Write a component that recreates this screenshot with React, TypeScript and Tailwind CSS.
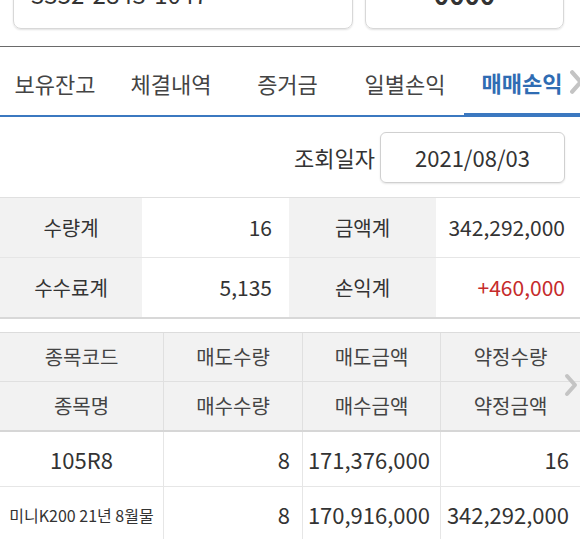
import React from "react";

const Chevron = ({ className }: { className: string }) => (
  <svg className={className} viewBox="0 0 14 24" fill="none">
    <polyline points="3,3 11,12 3,21" stroke="#c4c4c4" strokeWidth="4" strokeLinecap="round" strokeLinejoin="round" />
  </svg>
);

export default function App() {
  const tabs = [
    { t: "보유잔고", w: "w-[116px]" },
    { t: "체결내역", w: "w-[116px]" },
    { t: "증거금", w: "w-[117px]" },
    { t: "일별손익", w: "w-[118px]" },
    { t: "매매손익", w: "w-[116px]", active: true },
  ];
  return (
    <div className="w-[580px] h-[539px] overflow-hidden bg-white text-[#333] font-['Noto_Sans_CJK_KR','Noto_Sans',sans-serif]">
      {/* top clipped inputs */}
      <div className="h-[47px] overflow-hidden border-b border-[#6a6a6a]">
        <div className="flex -mt-[31px]">
          <div className="ml-[13px] w-[340px] h-[60px] rounded-lg border border-[#d8d8d8] shadow-[0_1px_2px_rgba(0,0,0,0.12)] flex items-center pl-[17px] pb-[10px] text-[24px] leading-none">
            3352-2843-1047
          </div>
          <div className="ml-[12px] w-[199px] h-[60px] rounded-lg border border-[#d8d8d8] shadow-[0_1px_2px_rgba(0,0,0,0.12)] flex items-center justify-center pb-[10px] text-[26px] font-bold leading-none">
            0000
          </div>
        </div>
      </div>

      {/* tabs */}
      <div className="relative h-[70px] flex items-stretch border-b-2 border-[#3b78c0] pt-[4px]">
        <div className="flex -ml-[3px]">
          {tabs.map((tab) => (
            <div
              key={tab.t}
              className={`${tab.w} flex items-center justify-center text-[22px] ${
                tab.active ? "text-[#2f6cb3] font-bold border-b-2 border-[#3b78c0]" : "text-[#444]"
              }`}
            >
              {tab.t}
            </div>
          ))}
        </div>
        <Chevron className="absolute right-[-4px] top-[22px] w-[15px] h-[26px]" />
      </div>

      {/* date row */}
      <div className="h-[80px] flex items-center justify-end pr-[15px]">
        <span className="text-[22px] text-[#333] mr-[5px]">조회일자</span>
        <div className="w-[185px] h-[51px] rounded-md border border-[#d0d0d0] shadow-[0_1px_2px_rgba(0,0,0,0.1)] flex items-center justify-center text-[22px] text-[#333]">
          2021/08/03
        </div>
      </div>

      {/* summary table */}
      <div className="border-t border-[#e0e0e0] border-b-2 border-b-[#d8d8d8] grid grid-cols-[142px_147px_147px_144px] text-[20px]">
        <div className="h-[60px] bg-[#f2f2f2] flex items-center justify-center border-b border-[#e6e6e6]">수량계</div>
        <div className="h-[60px] flex items-center justify-end pr-[17px] text-[21px] border-b border-[#e6e6e6]">16</div>
        <div className="h-[60px] bg-[#f2f2f2] flex items-center justify-center border-b border-[#e6e6e6]">금액계</div>
        <div className="h-[60px] flex items-center justify-end pr-[15px] text-[21px] border-b border-[#e6e6e6]">342,292,000</div>
        <div className="h-[59px] bg-[#f2f2f2] flex items-center justify-center">수수료계</div>
        <div className="h-[59px] flex items-center justify-end pr-[17px] text-[21px]">5,135</div>
        <div className="h-[59px] bg-[#f2f2f2] flex items-center justify-center">손익계</div>
        <div className="h-[59px] flex items-center justify-end pr-[15px] text-[21px] text-[#c62b2b]">+460,000</div>
      </div>

      {/* detail table */}
      <div className="relative mt-[13px] border-t border-[#dcdcdc]">
        <div className="grid grid-cols-[164px_139px_138px_139px] bg-[#f2f2f2] text-[20px] text-[#444] border-b-2 border-[#d6d6d6]">
          {["종목코드", "매도수량", "매도금액", "약정수량"].map((h, i) => (
            <div key={h} className={`h-[49px] flex items-center justify-center border-b border-[#e0e0e0] ${i < 3 ? "border-r border-r-[#e0e0e0]" : ""}`}>
              {h}
            </div>
          ))}
          {["종목명", "매수수량", "매수금액", "약정금액"].map((h, i) => (
            <div key={h} className={`h-[48px] flex items-center justify-center ${i < 3 ? "border-r border-[#e0e0e0]" : ""}`}>
              {h}
            </div>
          ))}
        </div>
        <Chevron className="absolute right-[2px] top-[40px] w-[14px] h-[24px]" />
        <div className="grid grid-cols-[164px_139px_138px_139px] text-[22px] text-[#333]">
          <div className="h-[55px] flex items-center justify-center border-r border-b border-[#e6e6e6]">105R8</div>
          <div className="h-[55px] flex items-center justify-end pr-[12px] border-r border-b border-[#e6e6e6]">8</div>
          <div className="h-[55px] flex items-center justify-end pr-[10px] border-r border-b border-[#e6e6e6]">171,376,000</div>
          <div className="h-[55px] flex items-center justify-end pr-[11px] border-b border-[#e6e6e6]">16</div>
          <div className="h-[55px] flex items-center justify-center border-r border-[#e6e6e6] text-[16px]">미니K200 21년 8월물</div>
          <div className="h-[55px] flex items-center justify-end pr-[12px] border-r border-[#e6e6e6]">8</div>
          <div className="h-[55px] flex items-center justify-end pr-[10px] border-r border-[#e6e6e6]">170,916,000</div>
          <div className="h-[55px] flex items-center justify-end pr-[11px]">342,292,000</div>
        </div>
      </div>
    </div>
  );
}
